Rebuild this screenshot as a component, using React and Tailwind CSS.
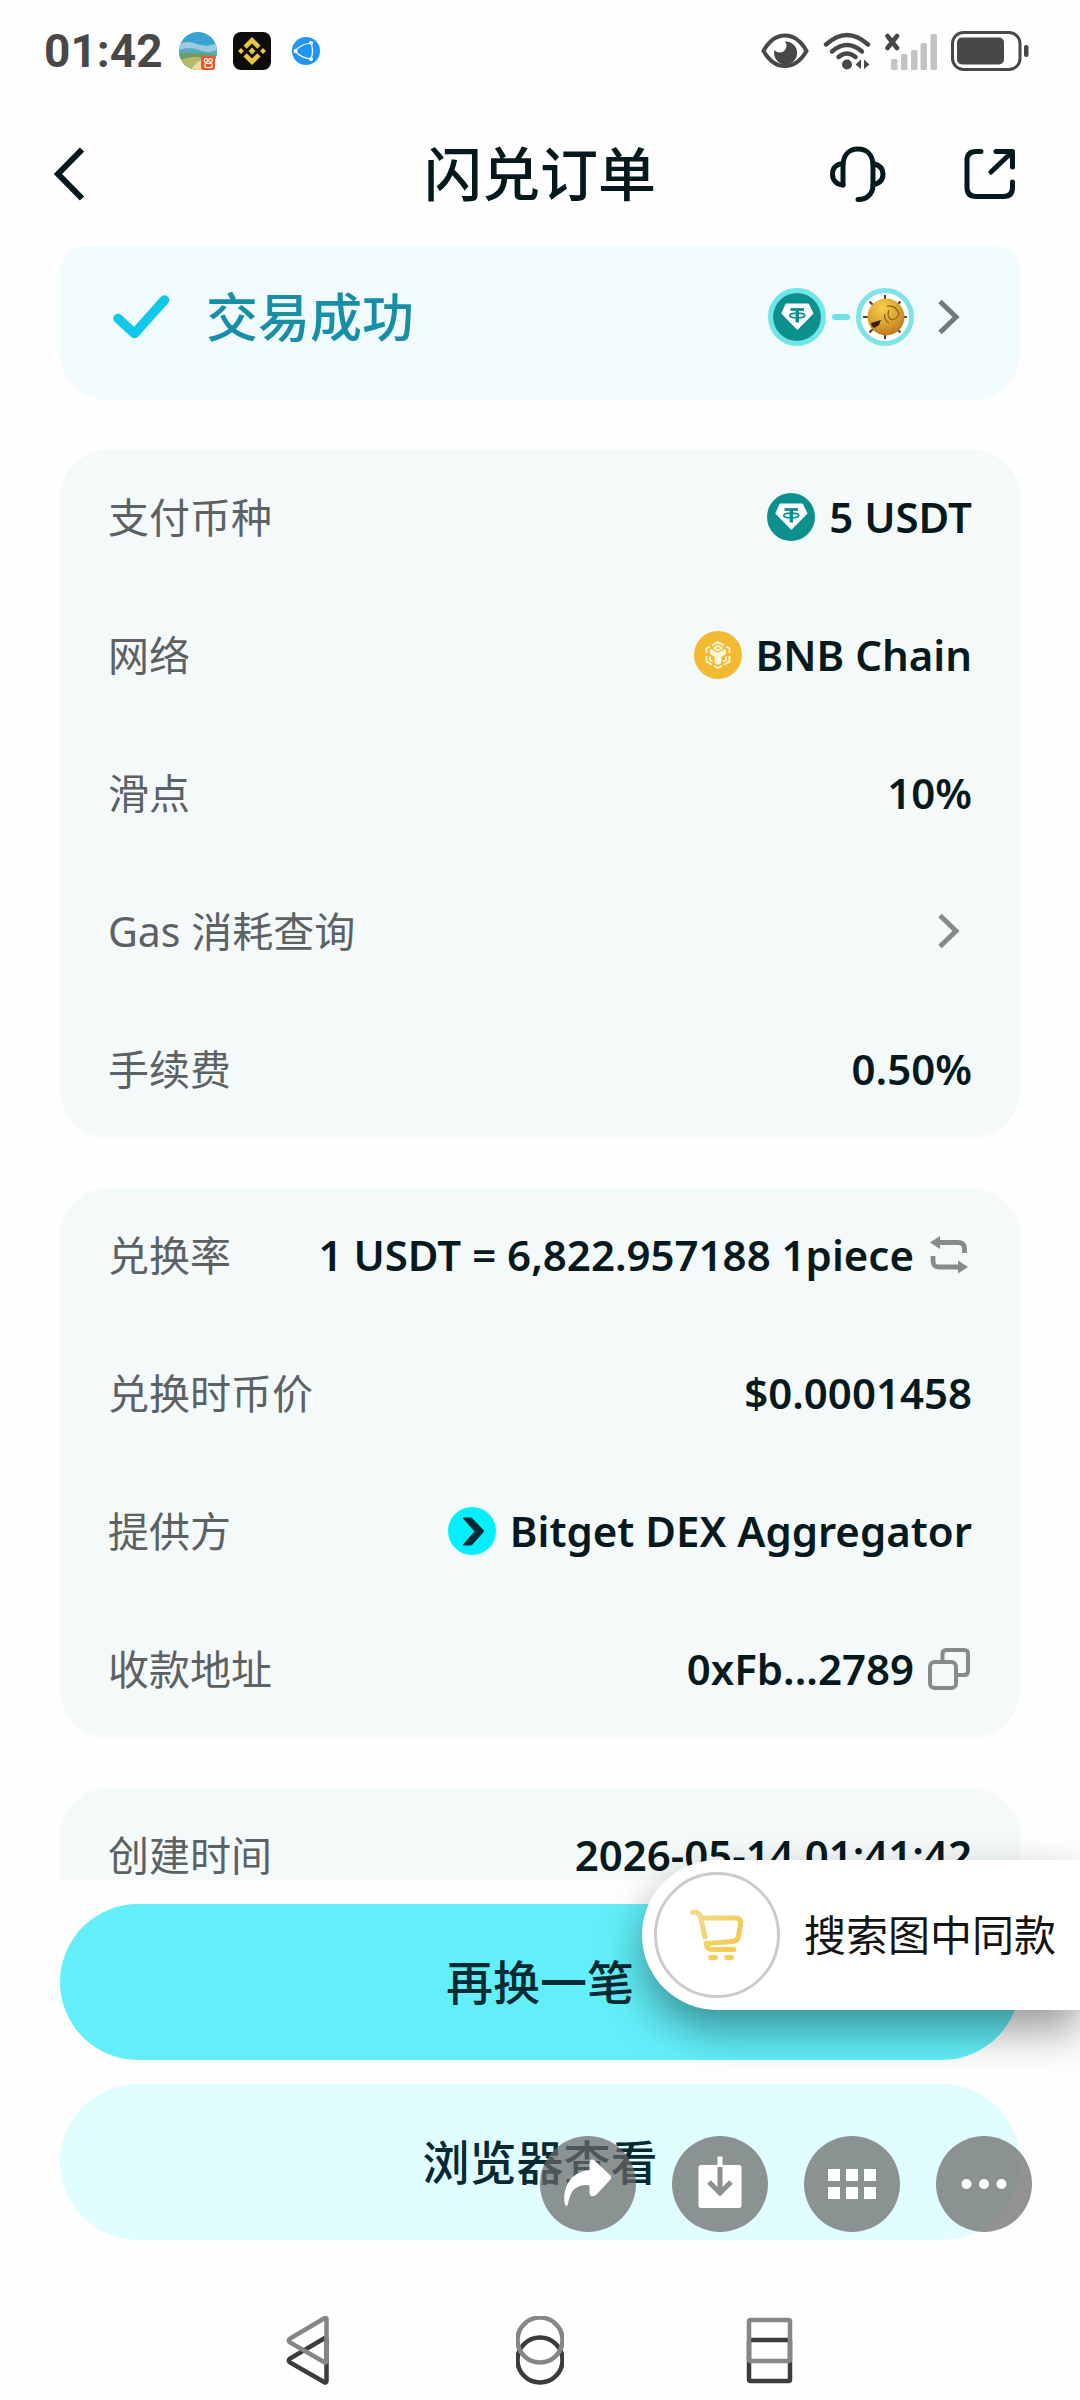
import React from 'react';

const IconBack = () => (
  <svg viewBox="0 0 32 54" className="w-8 h-[54px]" fill="none" stroke="#04191d" strokeWidth="6">
    <path d="M30 2.500 L6 27 L30 51.500" />
  </svg>
);

const IconHeadset = () => (
  <svg viewBox="0 0 56 56" className="w-14 h-14" fill="none" stroke="#04191d" strokeWidth="5" strokeLinecap="round" strokeLinejoin="round">
    <path d="M13 39 V20 C13 9 19 3 28 3 C37 3 43 9 43 20 V39 C43 48 37 53.500 28 53.500" />
    <path d="M13 17.500 C6 18 2.500 22 2.500 28 C2.500 34 6 38.500 13 39" />
    <path d="M43 17.500 C49.500 19 53 22.500 53 28 C53 33.500 49.500 37.500 43 39" />
  </svg>
);

const IconExternal = () => (
  <svg viewBox="0 0 52 52" className="w-[52px] h-[52px]" fill="none" stroke="#04191d" strokeWidth="5" strokeLinecap="round" strokeLinejoin="round">
    <path d="M17 3.500 H12 Q3 3.500 3 12.500 V39.500 Q3 48.500 12 48.500 H39.500 Q48.500 48.500 48.500 39.500 V34" />
    <path d="M32 3.500 H48.500 V19 M48 4 L27 24" />
  </svg>
);

const IconTravelApp = () => (
  <svg viewBox="0 0 38 38" className="w-[38px] h-[38px]">
    <defs>
      <clipPath id="travel-clip"><circle cx="19" cy="19" r="19" /></clipPath>
    </defs>
    <g clipPath="url(#travel-clip)">
      <rect width="38" height="38" fill="#38a3cf" />
      <path d="M0 12 Q8 8 18 12 T38 11 V22 H0Z" fill="#9ccbe0" />
      <path d="M0 18 Q10 14 20 18 T38 18 V26 H0Z" fill="#5aa9c4" />
      <path d="M0 22 Q12 19 38 23 V38 H0Z" fill="#6f9e62" />
      <path d="M0 29 Q14 22 30 27 V38 H0Z" fill="#b9b86a" />
      <path d="M12 38 Q18 28 26 27 L24 38Z" fill="#ecd9a8" />
    </g>
    <rect x="22" y="24" width="14" height="14" rx="3" fill="#f0562b" />
    <circle cx="27" cy="28.500" r="1.800" fill="none" stroke="#fff" strokeWidth="1.200" />
    <circle cx="31.500" cy="28.500" r="1.800" fill="none" stroke="#fff" strokeWidth="1.200" />
    <rect x="26" y="31.500" width="7" height="4" rx="1" fill="none" stroke="#fff" strokeWidth="1.200" />
  </svg>
);

const IconBinance = () => (
  <svg viewBox="0 0 38 38" className="w-[38px] h-[38px]">
    <rect width="38" height="38" rx="8" fill="#0d0c0a" />
    <g fill="#e9c63c">
      <path d="M19 5 L27.500 13.500 L24.300 16.700 L19 11.400 L13.700 16.700 L10.500 13.500Z" />
      <path d="M19 33 L27.500 24.500 L24.300 21.300 L19 26.600 L13.700 21.300 L10.500 24.500Z" />
      <path d="M19 15.500 L22.500 19 L19 22.500 L15.500 19Z" />
      <path d="M8 16 L11 19 L8 22 L5 19Z" />
      <path d="M30 16 L33 19 L30 22 L27 19Z" />
    </g>
  </svg>
);

const IconGlobeApp = () => (
  <svg viewBox="0 0 38 38" className="w-[38px] h-[38px]" stroke="#fff" strokeWidth="1.200">
    <circle cx="19" cy="19" r="14" fill="#1f96f3" stroke="none" />
    <path d="M8 19 Q14 12 24 11 Q27 19 24 27 Q14 26 8 19Z" fill="none" />
    <circle cx="8.500" cy="19" r="1.400" fill="#fff" />
    <circle cx="24" cy="11" r="1.400" fill="#fff" />
    <circle cx="24" cy="27" r="1.400" fill="#fff" />
  </svg>
);

const IconEye = () => (
  <svg viewBox="0 0 48 38" className="w-12 h-[38px]">
    <path d="M2.500 19 C8 9 15 3.500 24 3.500 C33 3.500 40 9 45.500 19 C40 28.500 33 34 24 34 C15 34 8 28.500 2.500 19Z" fill="none" stroke="#484848" strokeWidth="4" />
    <path d="M24 9.500 A11.500 11.500 0 1 1 13.500 18 A6 6 0 1 0 24 9.500Z" fill="#484848" />
  </svg>
);

const IconWifi = () => (
  <svg viewBox="0 0 48 38" className="w-12 h-[38px]" fill="none" stroke="#484848" strokeWidth="4.400" strokeLinecap="round">
    <path d="M3 12.500 Q24 -6.500 45 12.500" />
    <path d="M9 19.500 Q24 6.500 39 19.500" />
    <path d="M15.500 25 Q24 18 32.500 25" />
    <circle cx="24" cy="32.500" r="5" fill="#484848" stroke="none" />
    <path d="M38 27.500 V37 L32.500 32.500Z M41 27.500 V37 L46.500 32.500Z" fill="#484848" stroke="none" />
  </svg>
);

const IconSignal = () => (
  <svg viewBox="0 0 52 38" className="w-[52px] h-[38px]">
    <path d="M2.500 4 L12 16 M12 4 L2.500 16" stroke="#484848" strokeWidth="4.600" strokeLinecap="round" />
    <g fill="#c3c3c3">
      <rect x="6" y="27" width="6.500" height="11" rx="1.500" />
      <rect x="16" y="22" width="6.500" height="16" rx="1.500" />
      <rect x="26" y="18" width="6.500" height="20" rx="1.500" />
      <rect x="35.500" y="11" width="6.500" height="27" rx="1.500" />
      <rect x="45.500" y="2" width="6.500" height="36" rx="1.500" />
    </g>
  </svg>
);

const IconBattery = () => (
  <svg viewBox="0 0 78 40" className="w-[78px] h-10">
    <rect x="1.500" y="1.500" width="67.500" height="37" rx="11" fill="none" stroke="#484848" strokeWidth="3" />
    <rect x="6" y="6.500" width="47" height="27" rx="5" fill="#484848" />
    <rect x="73" y="14" width="4.500" height="12" rx="2" fill="#484848" />
  </svg>
);

const IconUsdt = () => (
  <svg viewBox="0 0 48 48" className="w-12 h-12">
    <circle cx="24" cy="24" r="24" fill="#0b908e" />
    <path d="M13 11 H35.500 L40 20.500 L24.300 36.500 L8.800 20.500Z" fill="#fff" stroke="#fff" strokeWidth="1" strokeLinejoin="round" />
    <g fill="none" stroke="#0b908e">
      <path d="M17.500 16.500 H31" strokeWidth="2.800" />
      <path d="M24.300 16.500 V29.500" strokeWidth="3.400" />
      <ellipse cx="24.300" cy="22.500" rx="7.500" ry="2.400" strokeWidth="1.600" />
    </g>
  </svg>
);

const IconBnbChain = () => (
  <svg viewBox="0 0 48 48" className="w-12 h-12">
    <circle cx="24" cy="24" r="24" fill="#f2ba32" />
    <g fill="none" stroke="#fff8dc" strokeWidth="1.800" strokeLinejoin="round">
      <path d="M18 14.500 L24 11 L30 14.500 M32 15.500 L35.500 17.500 V22 M35.500 25 V30.500 L30 33.700 M28 34.800 L24 37 L20 34.800 M18 33.700 L12.500 30.500 V25 M12.500 22 V17.500 L16 15.500" />
      <path d="M24 14.800 L28 17.200 L24 19.500 L20 17.200Z" />
      <path d="M17 19 L24 23 L31 19 V22.500 L26.500 25.500 V31.500 L24 33 L21.500 31.500 V25.500 L17 22.500Z" fill="#fff8dc" />
      <path d="M16 25.500 V29 L18.500 30.500 M32 25.500 V29 L29.500 30.500" />
    </g>
  </svg>
);

const IconCoin = () => (
  <svg viewBox="0 0 48 48" className="w-12 h-12">
    <defs>
      <radialGradient id="coin" cx="0.4" cy="0.25" r="0.8">
        <stop offset="0" stopColor="#f6cf4e" />
        <stop offset="0.6" stopColor="#d79f2c" />
        <stop offset="1" stopColor="#b5741f" />
      </radialGradient>
    </defs>
    <path d="M24 2 V46 M2 24 H46 M8.500 8.500 L39.500 39.500 M39.500 8.500 L8.500 39.500" stroke="#5b3a1c" strokeWidth="2" />
    <circle cx="25" cy="24" r="18.500" fill="url(#coin)" />
    <path d="M26 13 Q34 12 38 20 M28 17 Q25 24 31 27 Q37 26 38 20 M24 21 Q22 26 28 30" fill="none" stroke="#8a5c1a" strokeWidth="1.200" />
    <path d="M10 30 L20 27 L18 32 L13 35 Q10 33 10 30Z" fill="#3b1c0c" />
  </svg>
);

const IconBitget = () => (
  <svg viewBox="0 0 48 48" className="w-12 h-12">
    <circle cx="24" cy="24" r="24" fill="#00f0ff" />
    <path d="M15 11 H23.500 L36 24 L23.500 38 H15 L27 24.500Z" fill="#062a33" stroke="#062a33" strokeWidth="1" strokeLinejoin="round" />
  </svg>
);

const IconCheck = () => (
  <svg viewBox="0 0 58 46" className="w-[58px] h-[46px]" fill="none" stroke="#10c8ec" strokeWidth="9.500" strokeLinecap="round" strokeLinejoin="round">
    <path d="M6 24.500 L22.500 39.500 L52.500 6" />
  </svg>
);

const IconChevron = ({ color }) => (
  <svg viewBox="0 0 44 44" className="w-11 h-11" fill="none" stroke={color} strokeWidth="5">
    <path d="M12 6.500 L28 22 L12 37.500" />
  </svg>
);

const IconSwap = () => (
  <svg viewBox="0 0 44 44" className="w-11 h-11" fill="none" stroke="#858c8c" strokeWidth="4.800">
    <path d="M8 9.500 H30 Q36.500 9.500 36.500 16 V20" />
    <path d="M34 34 H11 Q5 34 5 27.500 V23" />
    <path d="M2 9.500 L12 3 V16Z M40 34 L30 27.500 V40.500Z" fill="#858c8c" stroke="none" />
  </svg>
);

const IconCopy = () => (
  <svg viewBox="0 0 44 44" className="w-11 h-11" fill="none" stroke="#858c8c" strokeWidth="4">
    <rect x="2" y="15" width="26" height="26" rx="4.500" />
    <path d="M14.500 15 V7 Q14.500 3 18.500 3 H36 Q40 3 40 7 V24 Q40 28 36 28 H28" />
  </svg>
);

const IconCart = () => (
  <svg viewBox="0 0 54 52" className="w-[54px] h-[52px]">
    <defs>
      <linearGradient id="cart" x1="0" y1="0" x2="1" y2="0.6">
        <stop offset="0" stopColor="#f6dc8a" />
        <stop offset="1" stopColor="#f2cb50" />
      </linearGradient>
    </defs>
    <g fill="none" stroke="url(#cart)" strokeWidth="5" strokeLinecap="round" strokeLinejoin="round">
      <path d="M2.500 3.500 Q9 2 10.500 8 L15 28 M12 9 H45 Q51.500 9 50.500 15 L48.500 27 Q47.500 32.500 42 32.500 L16 34.500 Q17 40.500 22 40.500 H44" />
    </g>
    <rect x="18" y="46" width="10" height="5" rx="2.500" fill="#f2cf5c" />
    <rect x="34" y="46" width="10" height="5" rx="2.500" fill="#f2cf5c" />
  </svg>
);

const IconShare = () => (
  <svg viewBox="0 0 96 96" className="w-24 h-24">
    <path d="M25.500 70 C23 63 24 52 30 44 C35 38 42 34.500 49.500 34.300 V27 C49.500 23.500 52.500 22.500 55 25 L70 39 C71.500 40.500 71.500 42.500 70 44 L56.500 58.500 C53.500 61.500 49.500 60.500 49.500 57 V49.500 C42 48 35 51 31.500 57 C29 61 28.500 66 27.500 69.500Z" fill="#fff" />
  </svg>
);

const IconSave = () => (
  <svg viewBox="0 0 96 96" className="w-24 h-24">
    <rect x="26.500" y="29" width="43" height="43" rx="2.500" fill="#fff" />
    <path d="M48 20.500 V30" stroke="#fff" strokeWidth="5" />
    <path d="M48 31 V56 M37 46 L48 57 L59 46" fill="none" stroke="#8a9091" strokeWidth="5" />
  </svg>
);

const IconGrid = () => (
  <svg viewBox="0 0 96 96" className="w-24 h-24" fill="#fff">
    <rect x="24" y="33" width="12" height="12" />
    <rect x="42" y="33" width="12" height="12" />
    <rect x="60" y="33" width="12" height="12" />
    <rect x="24" y="51" width="12" height="12" />
    <rect x="42" y="51" width="12" height="12" />
    <rect x="60" y="51" width="12" height="12" />
  </svg>
);

const IconMore = () => (
  <svg viewBox="0 0 96 96" className="w-24 h-24" fill="#fff">
    <circle cx="30.500" cy="48" r="5" />
    <circle cx="48" cy="48" r="5" />
    <circle cx="65.500" cy="48" r="5" />
  </svg>
);

const StatusBar = () => (
  <div className="flex items-center justify-between h-[102px] pl-11 pr-[51px]">
    <div className="flex items-center gap-4">
      <span className="font-[Roboto,sans-serif] text-[46px] leading-[52px] font-bold text-[#484848]">01:42</span>
      <IconTravelApp />
      <IconBinance />
      <IconGlobeApp />
    </div>
    <div className="flex items-center gap-[14px]">
      <IconEye />
      <IconWifi />
      <IconSignal />
      <IconBattery />
    </div>
  </div>
);

const Header = () => (
  <header className="grid grid-cols-[1fr_auto_1fr] items-center h-36 px-13">
    <button aria-label="返回" className="justify-self-start">
      <IconBack />
    </button>
    <h1 className="text-[58px] leading-[72px] font-medium text-[#04191d]">闪兑订单</h1>
    <div className="flex items-center justify-end gap-[78px] pr-3">
      <button aria-label="客服">
        <IconHeadset />
      </button>
      <button aria-label="分享">
        <IconExternal />
      </button>
    </div>
  </header>
);

const Row = ({ label, icon, value, action }) => (
  <div className="flex items-center justify-between h-[52px]">
    <dt className="text-[41px] text-[#5c6263]">{label}</dt>
    <dd className="flex items-center gap-[14px] text-[42px] font-semibold text-[#06191d]">
      {icon}
      {value}
      {action}
    </dd>
  </div>
);

const Card = ({ children }) => (
  <dl className="flex flex-col gap-[86px] px-12 pt-[41px] pb-[43px] rounded-[48px] bg-[#f4f9fa] leading-[52px]">
    {children}
  </dl>
);

const navItems = [
  {
    label: '系统返回',
    shape: <path d="M40.500 3 V45 Q40.500 47.500 38 46 L4 26.500 Q1.500 24.500 4 22.500 L38 2.500 Q40.500 1 40.500 3Z" />,
  },
  { label: '主屏幕', shape: <circle cx="24" cy="24" r="22.500" /> },
  { label: '最近任务', shape: <rect x="3" y="4" width="41" height="41" rx="1.500" /> },
];

const App = () => {
  return (
    <div className="relative flex flex-col h-screen overflow-hidden bg-[#fefefe] font-['Noto_Sans','Noto_Sans_CJK_SC',sans-serif]">
      <StatusBar />
      <Header />

      <main className="flex flex-col flex-1 min-h-0 gap-[50px] px-15 overflow-hidden">
        <button className="flex items-center justify-between shrink-0 pl-[52px] pr-12 pt-9 pb-12 rounded-t-3xl rounded-b-[48px] bg-[#f1fbfd]">
          <span className="flex items-center gap-9">
            <IconCheck />
            <span className="text-[52px] leading-[70px] font-medium text-[#188fa7]">交易成功</span>
          </span>
          <span className="flex items-center gap-[6px]">
            <span className="flex items-center justify-center w-[58px] h-[58px] rounded-full border-[5px] border-[#6fe6ea]">
              <IconUsdt />
            </span>
            <span className="w-[18px] h-[6px] rounded-full bg-[#6fe0e6]" />
            <span className="flex items-center justify-center w-[58px] h-[58px] rounded-full border-[5px] border-[#7fe3e8] bg-white">
              <IconCoin />
            </span>
            <span className="pl-2">
              <IconChevron color="#747a7a" />
            </span>
          </span>
        </button>

        <Card>
          <Row label="支付币种" icon={<IconUsdt />} value="5 USDT" />
          <Row label="网络" icon={<IconBnbChain />} value="BNB Chain" />
          <Row label="滑点" value="10%" />
          <Row
            label="Gas 消耗查询"
            action={
              <button aria-label="查询">
                <IconChevron color="#858c8c" />
              </button>
            }
          />
          <Row label="手续费" value="0.50%" />
        </Card>

        <Card>
          <Row
            label="兑换率"
            value="1 USDT = 6,822.957188 1piece"
            action={
              <button aria-label="切换">
                <IconSwap />
              </button>
            }
          />
          <Row label="兑换时币价" value="$0.0001458" />
          <Row label="提供方" icon={<IconBitget />} value="Bitget DEX Aggregator" />
          <Row
            label="收款地址"
            value="0xFb...2789"
            action={
              <button aria-label="复制">
                <IconCopy />
              </button>
            }
          />
        </Card>

        <Card>
          <Row label="创建时间" value="2026-05-14 01:41:42" />
        </Card>
      </main>

      <footer className="relative shrink-0 pt-6">
        <div className="flex flex-col gap-6 px-15 text-[47px] leading-[60px] font-medium text-[#062a33]">
          <button className="py-12 rounded-full bg-[#62eff9]">再换一笔</button>
          <button className="py-12 rounded-full bg-[#e0fdff]">浏览器查看</button>
        </div>

        <nav className="flex justify-center gap-[182px] pt-19 pb-3">
          {navItems.map(item => (
            <button key={item.label} aria-label={item.label}>
              <svg viewBox="0 0 48 72" className="w-12 h-18" fill="none" strokeWidth="4.500">
                <g stroke="#3c3c3c" transform="translate(0 20)">{item.shape}</g>
                <g stroke="#868686">{item.shape}</g>
              </svg>
            </button>
          ))}
        </nav>

        {/* 悬浮：搜同款 */}
        <button className="absolute right-0 -top-5 flex items-center gap-6 h-[150px] pl-3 pr-6 rounded-l-full bg-white shadow-[0_20px_44px_rgba(0,0,0,0.4)]">
          <span className="flex items-center justify-center w-[126px] h-[126px] rounded-full border-[3px] border-[#cbcbcb]">
            <IconCart />
          </span>
          <span className="text-[42px] leading-[60px] text-[#141414]">搜索图中同款</span>
        </button>

        {/* 悬浮：图片操作 */}
        <div className="absolute right-12 bottom-42 flex gap-9">
          <button aria-label="转发" className="rounded-full bg-[#6a6868]/72">
            <IconShare />
          </button>
          <button aria-label="保存" className="rounded-full bg-[#6a6868]/72">
            <IconSave />
          </button>
          <button aria-label="九宫格" className="rounded-full bg-[#6a6868]/72">
            <IconGrid />
          </button>
          <button aria-label="更多" className="rounded-full bg-[#6a6868]/72">
            <IconMore />
          </button>
        </div>
      </footer>
    </div>
  );
};

export default App;
